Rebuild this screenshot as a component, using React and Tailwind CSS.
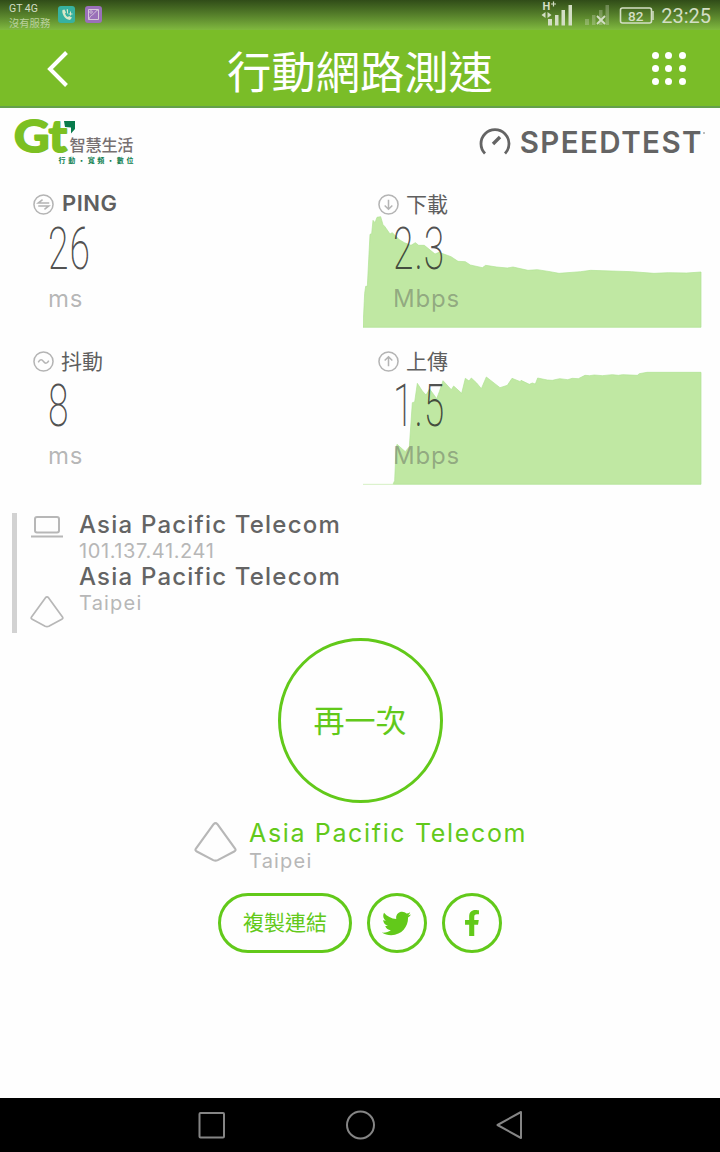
import React from 'react';
import { FaTwitter, FaFacebookF } from 'react-icons/fa';

const DOWNLOAD_POINTS = '24,427 29,325 32,304 37,304 45,148 50,146 54,106 60,113 66,97 77,95 84,119 89,124 105,147 112,143 133,164 148,173 168,181 181,173 191,181 208,181 240,207 252,202 288,215 309,229 331,230 346,240 382,248 392,241 425,246 457,249 474,246 519,256 547,254 585,260 612,265 677,260 707,256 830,260 897,265 940,263 995,264 1038,261 1038,427';
const UPLOAD_POINTS = '114,433 119,422 123,325 126,313 151,335 163,320 172,188 179,186 187,130 202,153 213,165 224,147 245,176 253,155 264,122 289,149 296,138 320,160 331,115 342,123 349,114 365,129 379,146 394,111 435,143 457,136 471,115 496,125 498,121 523,133 532,129 541,132 548,114 577,120 592,121 614,116 638,119 652,115 670,116 690,106 704,107 718,105 742,107 772,104 790,106 803,104 847,106 853,101 876,97 1038,97 1038,433';

const PingIcon = () => (
  <path d="M17 9.500H5.500L10 6M5.500 12.500H16.500L12 16" />
);
const JitterIcon = () => <path d="M5.500 12c2-4 4-3 5.500-1s3.500 3 5.500-1" />;
const DownIcon = () => <path d="M11 6v10M7 12l4 4 4-4" />;
const UpIcon = () => <path d="M11 16V6M7 10l4-4 4 4" />;

const METRICS = [
  { label: 'PING', value: '26', unit: 'ms', icon: <PingIcon />, latin: true },
  { label: '下載', value: '2.3', unit: 'Mbps', icon: <DownIcon />, points: DOWNLOAD_POINTS },
  { label: '抖動', value: '8', unit: 'ms', icon: <JitterIcon /> },
  { label: '上傳', value: '1.5', unit: 'Mbps', icon: <UpIcon />, points: UPLOAD_POINTS, base: true },
];

const StatusBar = () => (
  <div className="h-[30px] shrink-0 flex justify-between bg-linear-to-b from-[#304c18] to-[#80b93f] text-[#d3dec5]">
    <div className="flex pl-[9px]">
      <div className="w-[49px] pt-[2px] font-['Roboto','Noto_Sans_CJK_TC',sans-serif] text-[10.500px] leading-[13px]">
        <p>GT 4G</p>
        <p className="whitespace-nowrap text-[10.300px] leading-[17px] text-[#b9d09d]">沒有服務</p>
      </div>
      <svg width="46" height="30" viewBox="0 0 46 30" fill="none">
        <rect x="0" y="6" width="17" height="17" rx="3" fill="#37b1a0" />
        <path d="M4.500 10c-1 3 2 9.500 7.500 10l2-2.500-3-1.500-1 1C8.500 16.500 7.500 15 7 13.500l1-1L6.500 9.500z" fill="#d9e8c8" />
        <path d="M8.500 10l1-.5v4M12.500 11.500v4m-2-1.500h4" stroke="#d9e8c8" />
        <rect x="27" y="6" width="17" height="17" rx="3" fill="#9a70b9" />
        <path d="M30.500 9.500h10v10h-10zM31 19.500c1-4 3-4 5-6s2-3 4-3.500" stroke="#d6c9d9" />
        <circle cx="33" cy="12" r="1.300" stroke="#d6c9d9" strokeWidth=".8" />
      </svg>
    </div>
    <div className="flex pr-[9px]">
      <svg width="113" height="30" viewBox="541 0 113 30" fill="none">
        <text x="542.500" y="10" fontSize="11" fontWeight="700" fill="currentColor" className="font-['Roboto',sans-serif]">H</text>
        <path d="M551 4h5m-2.500-2.500v5" stroke="currentColor" strokeWidth="1.200" />
        <path d="M541.500 15l4-3v6zM551.500 15l-4-3v6z" fill="currentColor" />
        <path d="M548 19h4v6.500h-4zM555 15h3.500v10.500H555zM561.500 10h3.500v15.500h-3.500zM568.500 5h3.500v20.500h-3.500z" fill="currentColor" />
        <path d="M585 19h4v6h-4zM592 15h3.500v10H592zM599 10h3.500v15H599zM605.500 5h3.500v20h-3.500z" fill="currentColor" opacity=".32" />
        <path d="M597 16l8 8m0-8l-8 8" stroke="currentColor" strokeWidth="1.800" />
        <rect x="620.500" y="8" width="31" height="15" rx="2" stroke="currentColor" strokeWidth="1.600" />
        <text x="628" y="20.500" fontSize="13.500" fontWeight="500" fill="currentColor" className="font-['Roboto',sans-serif]">82</text>
        <path d="M653 11v9" stroke="currentColor" strokeWidth="1.500" />
      </svg>
      <span className="pl-[7px] font-['Roboto',sans-serif] text-[20px] leading-[32px]">23:25</span>
    </div>
  </div>
);

const Header = () => (
  <header className="h-[78px] shrink-0 flex items-center justify-between border-b-2 border-[#64a04b] bg-[#7abd28] pl-[46px] pr-[34px] text-white">
    <svg width="24" height="40" viewBox="0 0 24 40" fill="none">
      <path d="M20.500 4.500L4 21l16.500 16.500" stroke="currentColor" strokeWidth="4" />
    </svg>
    <h1 className="pr-[2px] pt-[4px] font-['Noto_Sans_CJK_TC',sans-serif] text-[44.300px] leading-[70px]">行動網路測速</h1>
    <div className="grid grid-cols-3 gap-x-[6.500px] gap-y-[6px]">
      {[...Array(9)].map((_, i) => (
        <span key={i} className="size-[7px] rounded-full bg-white" />
      ))}
    </div>
  </header>
);

const Brand = () => (
  <div className="h-[78px] shrink-0 flex justify-between pl-[13px] pr-[15px]">
    <svg width="124" height="62" viewBox="13 108 124 62">
      <text x="14" y="152" fontSize="44" fontWeight="700" fill="#7cc022" stroke="#7cc022" strokeWidth="2" strokeLinejoin="round" textLength="53" lengthAdjust="spacingAndGlyphs" className="font-['Lato',sans-serif]">Gt</text>
      <path d="M64 121h11v8l-4 4.500v-6L65 127z" fill="#087b4c" />
      <text x="69.500" y="151" fontSize="16.200" fill="#777071" fontWeight="500" textLength="64" className="font-['Noto_Sans_CJK_TC',sans-serif]">智慧生活</text>
      <text x="58.500" y="163" fontSize="7" fill="#087b4c" fontWeight="700" textLength="75" className="font-['Noto_Sans_CJK_TC',sans-serif]">行動・寬頻・數位</text>
    </svg>
    <div className="flex h-[69px] items-center text-[#646464]">
      <svg width="32" height="30" viewBox="0 0 32 30" fill="none" stroke="currentColor" className="-ml-px mb-[2px]">
        <path d="M6 26.500A14 14 0 1 1 26 26.500" strokeWidth="2.800" />
        <path d="M14 17l7-7" strokeWidth="3.300" />
      </svg>
      <span className="ml-[9px] font-['Inter',sans-serif] text-[29.500px] font-semibold tracking-[1.450px]">SPEEDTEST</span>
      <span className="mb-[20px] size-[2px] rounded-full bg-[#aaaaaa]" />
    </div>
  </div>
);

const Metric = ({ label, value, unit, icon, points, base, latin }) => (
  <div className="relative h-[157px] pl-[33px]">
    {points && (
      <svg className={base ? 'absolute left-[18px] top-[27px]' : 'absolute left-[18px] top-[29px]'} width="339" height="115" viewBox="24 90 1017 345">
        <polygon points={points} fill="#c0e8a3" stroke="#aee291" strokeWidth="2" />
        {base && <path d="M24 433h92" stroke="#d5f0c3" strokeWidth="3" />}
      </svg>
    )}
    <div className="relative flex h-[36px] items-center gap-[8px] text-[#5f5f5f]">
      <svg width="21" height="21" viewBox="0 0 22 22" fill="none" stroke="#b4b4b4" strokeWidth="1.600">
        <circle cx="11" cy="11" r="10" />
        {icon}
      </svg>
      {latin ? (
        <span className="pb-px font-['Inter',sans-serif] text-[22px] font-semibold tracking-[0.500px]">{label}</span>
      ) : (
        <span className="-ml-px pb-px font-['Noto_Sans_CJK_TC',sans-serif] text-[21px] leading-[33px]">{label}</span>
      )}
    </div>
    <p className="relative ml-[15px] h-[52px] w-fit origin-left scale-x-[0.620] font-['Roboto',sans-serif] text-[60px] font-extralight leading-[53px] tracking-[1.500px] text-[#222222]/80">{value}</p>
    <p className="relative ml-[15px] h-[48px] font-['Inter',sans-serif] text-[24px] leading-[49px] tracking-[0.800px] text-[#505050]/42">{unit}</p>
  </div>
);

const ServerIcon = ({ size }) => (
  <svg width={size} height={size * 0.94} viewBox="0 0 34 32" fill="none" stroke="#b7b7b7" strokeWidth="1.700" strokeLinejoin="round" className="shrink-0">
    <path d="M15.500 1.700q1.500-1.500 3 0L32.500 21q1 1.500-.7 2.400l-13 6.800q-1.800.8-3.600 0l-13-6.800Q.5 22.500 1.500 21z" />
  </svg>
);

const Connection = () => (
  <section className="ml-[12px] mt-[13px] flex h-[120px] shrink-0 border-l-[5px] border-[#d2d2d2] pl-[13px] font-['Inter',sans-serif]">
    <div className="flex w-[34px] flex-col items-center justify-between pb-[5px] pt-px">
      <svg width="34" height="24" viewBox="0 0 34 24" fill="none" stroke="#b7b7b7" strokeWidth="2">
        <rect x="5" y="3" width="24" height="15.500" rx="2" />
        <path d="M1 22.500h32" />
      </svg>
      <ServerIcon size={34} />
    </div>
    <div className="pl-[15px]">
      <p className="text-[24px] font-medium leading-[24px] tracking-[1.200px] text-[#646464]">Asia Pacific Telecom</p>
      <p className="text-[20px] leading-[28px] tracking-[0.600px] text-[#b7b7b7]">101.137.41.241</p>
      <p className="text-[24px] font-medium leading-[24px] tracking-[1.200px] text-[#646464]">Asia Pacific Telecom</p>
      <p className="text-[20px] leading-[28px] tracking-[1.200px] text-[#b7b7b7]">Taipei</p>
    </div>
  </section>
);

const NavBar = () => (
  <nav className="flex h-[54px] shrink-0 items-center justify-center gap-[119px] bg-black pl-[2px]">
    <svg width="30" height="30" viewBox="0 0 30 30" fill="none" stroke="#858585" strokeWidth="2">
      <rect x="2.500" y="3" width="24.500" height="24.500" rx="1" />
    </svg>
    <svg width="30" height="30" viewBox="0 0 30 30" fill="none" stroke="#858585" strokeWidth="2">
      <circle cx="14.500" cy="15" r="13.500" />
    </svg>
    <svg width="30" height="30" viewBox="0 0 30 30" fill="none" stroke="#858585" strokeWidth="2" strokeLinejoin="round">
      <path d="M2.500 15L26 2v26z" />
    </svg>
  </nav>
);

export default function App() {
  return (
    <div className="flex h-[1152px] w-[720px] flex-col overflow-hidden bg-[#fefefe]">
      <StatusBar />
      <Header />
      <Brand />

      <section className="grid shrink-0 grid-cols-[345px_375px]">
        {METRICS.map((metric) => (
          <Metric key={metric.label} {...metric} />
        ))}
      </section>

      <Connection />

      <main className="flex flex-1 flex-col items-center pt-[5px] text-[#62c91a]">
        <button className="size-[165px] shrink-0 rounded-full border-[3px] border-current pb-[3px] font-['Noto_Sans_CJK_TC',sans-serif] text-[31px]">再一次</button>

        <div className="mt-[17px] flex w-[332px] gap-[12px] font-['Inter',sans-serif]">
          <div className="pt-[2px]">
            <ServerIcon size={43} />
          </div>
          <div className="whitespace-nowrap">
            <p className="text-[25px] leading-[27px] tracking-[1.650px]">Asia Pacific Telecom</p>
            <p className="text-[20px] leading-[28px] tracking-[1.200px] text-[#b7b7b7]">Taipei</p>
          </div>
        </div>

        <div className="mt-[18px] flex gap-[15px]">
          <button className="h-[60px] w-[134px] rounded-full border-[3px] border-current pb-[2px] font-['Noto_Sans_CJK_TC',sans-serif] text-[21px]">複製連結</button>
          <button className="flex size-[60px] items-center justify-center rounded-full border-[3px] border-current pr-px">
            <FaTwitter size={29} />
          </button>
          <button className="flex size-[60px] items-center justify-center rounded-full border-[3px] border-current">
            <FaFacebookF size={26} />
          </button>
        </div>
      </main>

      <NavBar />
    </div>
  );
}
